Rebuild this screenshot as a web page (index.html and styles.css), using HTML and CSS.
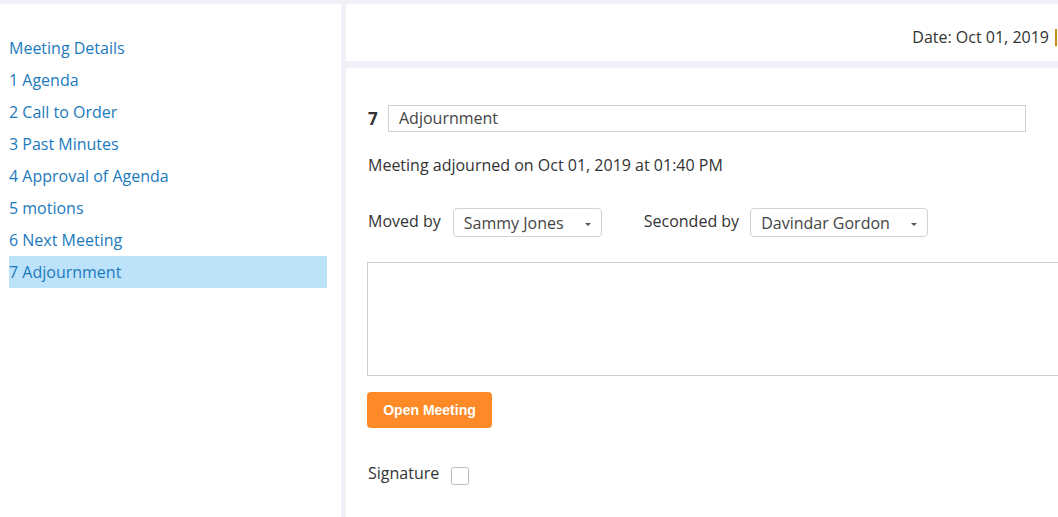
FILE: index.html
```html
<!DOCTYPE html>
<html>
<head>
<meta charset="utf-8">
<link rel="stylesheet" href="styles.css">
</head>
<body>
<div class="page">
  <aside class="sidebar">
    <ul class="nav">
      <li class="nav-item">Meeting Details</li>
      <li class="nav-item">1 Agenda</li>
      <li class="nav-item">2 Call to Order</li>
      <li class="nav-item">3 Past Minutes</li>
      <li class="nav-item">4 Approval of Agenda</li>
      <li class="nav-item">5 motions</li>
      <li class="nav-item">6 Next Meeting</li>
      <li class="nav-item active">7 Adjournment</li>
    </ul>
  </aside>
  <main class="main">
    <header class="topbar">
      <span class="date">Date: Oct 01, 2019</span><span class="sep"></span>
    </header>
    <section class="content">
      <div class="title-row">
        <span class="num">7</span>
        <div class="title-input">Adjournment</div>
      </div>
      <p class="adjourned">Meeting adjourned on Oct 01, 2019 at 01:40 PM</p>
      <div class="motion-row">
        <span class="label lift">Moved by</span>
        <div class="select sel-moved"><span>Sammy Jones</span><span class="caret"></span></div>
        <span class="label lift label-second">Seconded by</span>
        <div class="select sel-second"><span>Davindar Gordon</span><span class="caret"></span></div>
      </div>
      <div class="notes"></div>
      <button class="btn">Open Meeting</button>
      <div class="sig-row">
        <span class="label">Signature</span>
        <span class="checkbox"></span>
      </div>
    </section>
  </main>
</div>
</body>
</html>
```

FILE: styles.css
```css
html, body {
  margin: 0;
  padding: 0;
  height: 100%;
  overflow: hidden;
}
body {
  background: #f0f0f6;
  font-family: "Open Sans", "Liberation Sans", sans-serif;
  color: #333;
}
.page {
  display: flex;
  gap: 5px;
  padding-top: 4px;
  height: calc(100% - 4px);
}
.sidebar {
  width: 341px;
  flex: none;
  background: #fff;
}
.nav {
  list-style: none;
  margin: 0;
  padding: 28px 0 0 9px;
}
.nav-item {
  width: 318px;
  height: 32px;
  line-height: 32px;
  font-size: 16px;
  color: #1b7abd;
}
.nav-item.active {
  background: #bde3fb;
}
.main {
  flex: 1;
  display: flex;
  flex-direction: column;
  gap: 7px;
  min-width: 0;
}
.topbar {
  height: 57px;
  background: #fff;
  display: flex;
  justify-content: flex-end;
  align-items: center;
  font-size: 16px;
  color: #333;
}
.date {
  margin-right: 6px;
  padding-top: 8px;
}
.sep {
  width: 2px;
  height: 17px;
  margin-top: 10px;
  margin-right: 1px;
  background: #c98a1c;
}
.content {
  flex: 1;
  background: #fff;
  padding: 37px 0 0 21px;
}
.title-row {
  display: flex;
  align-items: center;
  height: 27px;
}
.num {
  font-weight: 700;
  font-size: 17px;
  width: 20px;
  padding-left: 1px;
}
.title-input {
  width: 626px;
  height: 25px;
  border: 1px solid #cfcfcf;
  line-height: 25px;
  padding-left: 10px;
  font-size: 16px;
  color: #444;
}
.adjourned {
  margin: 22px 0 0 1px;
  font-size: 16px;
  line-height: 22px;
}
.motion-row {
  display: flex;
  align-items: center;
  margin-top: 32px;
  height: 29px;
}
.label {
  font-size: 16px;
  padding-left: 1px;
}
.lift {
  margin-top: -3px;
}
.label-second {
  margin-left: 41px;
}
.select {
  height: 27px;
  border: 1px solid #d2d2d2;
  border-radius: 4px;
  display: flex;
  align-items: center;
  justify-content: space-between;
  padding: 0 10px 0 10px;
  font-size: 16px;
  color: #444;
  box-sizing: content-box;
}
.sel-moved {
  margin-left: 12px;
  width: 127px;
}
.sel-second {
  margin-left: 11px;
  width: 156px;
}
.caret {
  width: 0;
  height: 0;
  border-left: 3px solid transparent;
  border-right: 3px solid transparent;
  border-top: 3px solid #555;
  margin-top: 3px;
}
.notes {
  margin-top: 25px;
  height: 112px;
  border: 1px solid #cfcfcf;
  border-right: none;
}
.btn {
  display: block;
  margin-top: 16px;
  width: 125px;
  height: 36px;
  border: none;
  border-radius: 4px;
  background: #fd8a27;
  color: #fff;
  font-family: "Liberation Sans", Arial, sans-serif;
  font-size: 14px;
  font-weight: 700;
  padding: 0;
}
.sig-row {
  display: flex;
  align-items: flex-start;
  margin-top: 34px;
  line-height: 22px;
}
.checkbox {
  width: 16px;
  height: 16px;
  border: 1px solid #bdbdbd;
  border-radius: 3px;
  margin: 5px 0 0 12px;
}
```
